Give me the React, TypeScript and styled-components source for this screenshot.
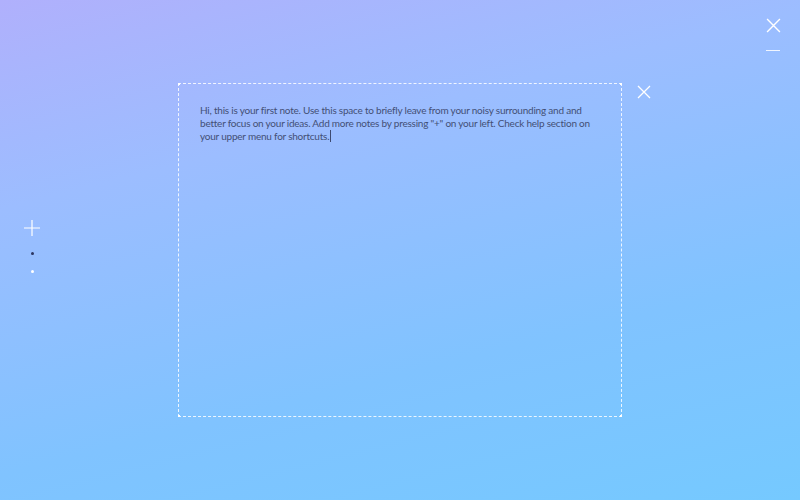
import React from "react";
import styled, { createGlobalStyle } from "styled-components";

const Global = createGlobalStyle`
  html, body { margin: 0; padding: 0; height: 100%; }
  body { font-family: "Lato", "Open Sans", sans-serif; overflow: hidden; }
  #root { height: 100%; }
`;

const Page = styled.div`
  width: 100vw;
  height: 100vh;
  display: flex;
  background: linear-gradient(166deg, #b0b0fc 0%, #9cbdff 30%, #80c3ff 68%, #75c9ff 100%);
  position: relative;
`;

const Rail = styled.nav`
  width: 64px;
  display: flex;
  flex-direction: column;
  align-items: center;
  padding-top: 219px;
`;

const RailButton = styled.button`
  width: 18px;
  height: 18px;
  padding: 0;
  border: none;
  background: none;
  display: flex;
  align-items: center;
  justify-content: center;
  cursor: pointer;
`;

const Dot = styled.span<{ $active?: boolean }>`
  width: 3px;
  height: 3px;
  border-radius: 50%;
  background: ${(p) => (p.$active ? "#2c3560" : "#ffffff")};
  margin-top: 15px;
`;

const Canvas = styled.main`
  flex: 1;
  position: relative;
`;

const Note = styled.section`
  position: absolute;
  left: 114px;
  top: 83px;
  width: 444px;
  height: 334px;
  box-sizing: border-box;
  border: 1px dashed rgba(255, 255, 255, 0.85);
  padding: 20px 21px;
`;

const Corner = styled.span<{ $x: "left" | "right"; $y: "top" | "bottom" }>`
  position: absolute;
  width: 2px;
  height: 2px;
  background: #fff;
  ${(p) => p.$x}: -1px;
  ${(p) => p.$y}: -1px;
`;

const NoteText = styled.div`
  font-size: 10px;
  letter-spacing: -0.22px;
  line-height: 13px;
  color: #434f75;
  width: 400px;
`;

const Caret = styled.span`
  display: inline-block;
  width: 1px;
  height: 12px;
  background: #3e4a70;
  vertical-align: -2px;
  margin-left: 1px;
`;

const NoteClose = styled.button`
  position: absolute;
  left: 458px;
  top: 1px;
  width: 14px;
  height: 14px;
  padding: 0;
  border: none;
  background: none;
  cursor: pointer;
  display: flex;
`;

const WindowControls = styled.div`
  position: absolute;
  right: 19px;
  top: 17px;
  display: flex;
  flex-direction: column;
  align-items: center;
  gap: 9px;
`;

const ControlButton = styled.button`
  width: 16px;
  height: 16px;
  padding: 0;
  border: none;
  background: none;
  display: flex;
  align-items: center;
  justify-content: center;
`;

const Minus = styled.span`
  display: block;
  width: 14px;
  height: 1px;
  background: rgba(255, 255, 255, 0.85);
`;

const Cross = ({ size }: { size: number }) => (
  <svg width={size} height={size} viewBox="0 0 14 14">
    <path d="M1 1 L13 13 M13 1 L1 13" stroke="#fff" strokeWidth="1.3" fill="none" />
  </svg>
);

const Plus = () => (
  <svg width="18" height="18" viewBox="0 0 18 18">
    <path d="M9 1 V17 M1 9 H17" stroke="#fff" strokeWidth="1.2" fill="none" />
  </svg>
);

export default function App() {
  return (
    <>
      <Global />
      <Page>
        <Rail>
          <RailButton aria-label="Add note">
            <Plus />
          </RailButton>
          <Dot $active />
          <Dot />
        </Rail>
        <Canvas>
          <Note>
            <Corner $x="left" $y="top" />
            <Corner $x="right" $y="top" />
            <Corner $x="left" $y="bottom" />
            <Corner $x="right" $y="bottom" />
            <NoteText>
              Hi, this is your first note. Use this space to briefly leave from your noisy surrounding and and
              better focus on your ideas. Add more notes by pressing "+" on your left. Check help section on
              your upper menu for shortcuts.
              <Caret />
            </NoteText>
            <NoteClose aria-label="Close note">
              <Cross size={14} />
            </NoteClose>
          </Note>
        </Canvas>
        <WindowControls>
          <ControlButton aria-label="Close">
            <Cross size={15} />
          </ControlButton>
          <ControlButton aria-label="Minimize">
            <Minus />
          </ControlButton>
        </WindowControls>
      </Page>
    </>
  );
}
